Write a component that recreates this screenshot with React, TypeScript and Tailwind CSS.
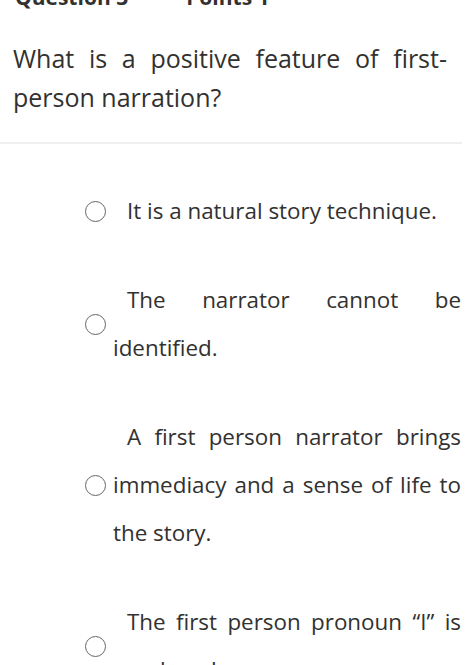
const options = [
  "It is a natural story technique.",
  "The narrator cannot be identified.",
  "A first person narrator brings immediacy and a sense of life to the story.",
  "The first person pronoun “I” is employed.",
];

function Radio() {
  return (
    <span className="block h-[21px] w-[21px] shrink-0 rounded-full border-[1.5px] border-[#666666] bg-white" />
  );
}

export default function App() {
  return (
    <div className="h-[665px] w-[474px] overflow-hidden bg-white text-[#323130] [font-family:'Open_Sans',sans-serif]">
      <div className="mt-[-16px] flex h-[26px] items-center gap-[58px] pl-[15px] text-[21px] leading-[26px] font-bold">
        <span>Question 3</span>
        <span>Points 1</span>
      </div>

      <p className="mt-[29px] w-[447px] pl-[13px] text-justify text-[25px] leading-[39px]">
        What is a positive feature of first-person narration?
      </p>

      <div className="mt-[25px] h-[2px] w-[462px] bg-[#efefef]" />

      <ul className="mt-[43px] flex flex-col gap-[41px] pl-[85px]">
        {options.map((o) => (
          <li key={o} className="flex items-center gap-[7px]">
            <Radio />
            <p className="w-[348px] indent-[14px] text-justify text-[22.4px] leading-[48px]">
              {o}
            </p>
          </li>
        ))}
      </ul>
    </div>
  );
}
